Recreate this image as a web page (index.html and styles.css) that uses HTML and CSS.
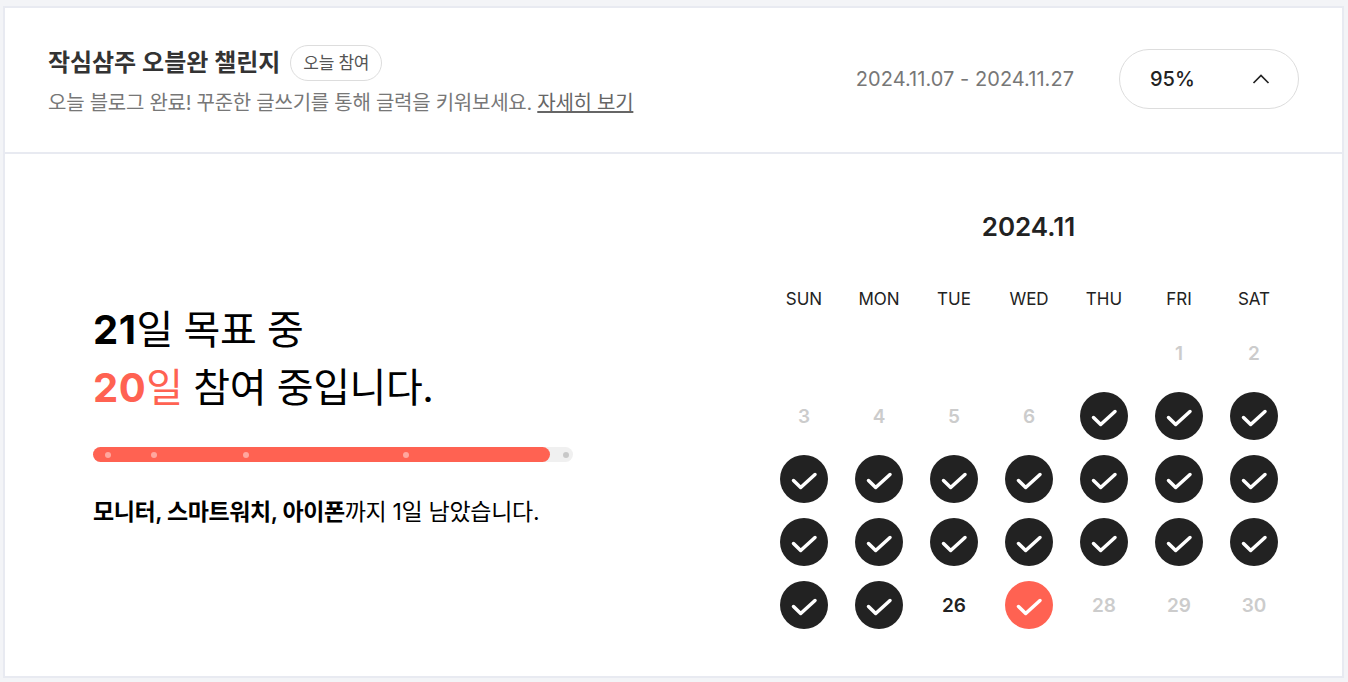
FILE: index.html
```html
<!DOCTYPE html>
<html lang="ko">
<head>
    <meta charset="UTF-8">
    <meta name="viewport" content="width=device-width, initial-scale=1.0">
    <title>작심삼주 오블완 챌린지</title>
    <link rel="stylesheet" href="styles.css">
</head>
<body>
    <section class="card">
        <header class="card-head">
            <div class="head-info">
                <div class="title-row">
                    <h2 class="title">작심삼주 오블완 챌린지</h2>
                    <span class="badge">오늘 참여</span>
                </div>
                <p class="desc">오늘 블로그 완료! 꾸준한 글쓰기를 통해 글력을 키워보세요. <a href="#" class="more">자세히 보기</a></p>
            </div>
            <span class="period">2024.11.07 - 2024.11.27</span>
            <button class="rate-btn" type="button">
                <span>95%</span>
                <svg class="chevron" width="20" height="20" viewBox="0 0 20 20" fill="none"><path d="M2.5 14 10 6.5 17.5 14" stroke="#222" stroke-width="1.7"/></svg>
            </button>
        </header>
        <div class="card-body">
            <div class="summary">
                <p class="goal"><b>21</b>일 목표 중<br><span class="accent"><b>20</b>일</span> 참여 중입니다.</p>
                <div class="progress">
                    <div class="progress-fill"></div>
                    <i class="dot dot-done dot-1"></i>
                    <i class="dot dot-done dot-2"></i>
                    <i class="dot dot-done dot-3"></i>
                    <i class="dot dot-done dot-4"></i>
                    <i class="dot dot-5"></i>
                </div>
                <p class="reward"><b>모니터, 스마트워치, 아이폰</b>까지 1일 남았습니다.</p>
            </div>
            <div class="calendar">
                <h3 class="month">2024.11</h3>
                <div class="week">
                    <span>SUN</span><span>MON</span><span>TUE</span><span>WED</span><span>THU</span><span>FRI</span><span>SAT</span>
                </div>
                <div class="days" id="days"></div>
            </div>
        </div>
    </section>
    <script>
        const days = document.getElementById('days');
        const check = '<svg width="48" height="48" viewBox="0 0 48 48" fill="none"><path d="M13.5 25.5 20.7 32.5 35 19.5" stroke="#fff" stroke-width="3.5" stroke-linecap="round" stroke-linejoin="round"/></svg>';

        // five leading blanks, the month starts on friday
        for (let i = 0; i < 5; i++) {
            days.appendChild(document.createElement('div'));
        }
        for (let d = 1; d <= 30; d++) {
            const cell = document.createElement('div');
            cell.className = 'day';
            if (d < 7 || d > 27) {
                cell.textContent = d;
                cell.classList.add('num', 'off');
            } else if (d === 26) {
                cell.textContent = d;
                cell.classList.add('num');
            } else {
                cell.classList.add(d === 27 ? 'today' : 'done');
                cell.innerHTML = check;
            }
            days.appendChild(cell);
        }
    </script>
</body>
</html>
```

FILE: styles.css
```css
* {
    box-sizing: border-box;
}
body {
    margin: 0;
    padding: 6px 4px 4px 3px;
    height: 682px;
    overflow: hidden;
    background-color: #f3f4f7;
    font-family: Inter, "Noto Sans CJK KR", sans-serif;
    color: #222;
}
p, h2, h3 {
    margin: 0;
}
.card {
    height: 672px;
    background: #fff;
    border: 2px solid #e8eaf1;
    display: flex;
    flex-direction: column;
}
.card-head {
    height: 146px;
    flex: none;
    display: flex;
    align-items: center;
    padding: 0 43px 2px 43px;
    border-bottom: 2px solid #e8eaf1;
}
.head-info {
    flex: 1;
    margin-top: 5px;
}
.title-row {
    display: flex;
    align-items: center;
    gap: 10px;
    margin-bottom: 7px;
}
.title {
    font-size: 24px;
    font-weight: 600;
    line-height: 36px;
    letter-spacing: -0.05px;
    color: #333;
}
.badge {
    display: inline-block;
    height: 36px;
    line-height: 34px;
    padding: 0 12px;
    border: 1px solid #ddd;
    border-radius: 18px;
    font-size: 17px;
    letter-spacing: -0.3px;
    color: #555;
}
.desc {
    font-size: 20px;
    line-height: 30px;
    color: #777;
    letter-spacing: -0.26px;
}
.more {
    color: #666;
    text-decoration: underline;
}
.period {
    font-size: 20px;
    letter-spacing: 0.05px;
    color: #777;
    margin-right: 45px;
}
.rate-btn {
    width: 180px;
    height: 60px;
    display: flex;
    align-items: center;
    justify-content: space-between;
    padding: 0 27px 0 30px;
    background: #fff;
    border: 1px solid #ddd;
    border-radius: 30px;
    font-family: inherit;
    font-size: 20px;
    font-weight: 500;
    color: #222;
}
.card-body {
    flex: 1;
    display: flex;
    justify-content: space-between;
    align-items: stretch;
    padding: 0 51px 0 88px;
}
.summary {
    width: 480px;
    align-self: center;
}
.goal {
    font-size: 40px;
    line-height: 58px;
    letter-spacing: -0.45px;
    color: #000;
}
.goal b {
    letter-spacing: 0.5px;
}
.accent {
    color: #ff6252;
}
.progress {
    position: relative;
    height: 15px;
    margin-top: 30px;
    background: #f0f0f0;
    border-radius: 8px;
}
.progress-fill {
    width: 95.2%;
    height: 100%;
    background: #ff6252;
    border-radius: 8px;
}
.dot {
    position: absolute;
    top: 5px;
    width: 6px;
    height: 6px;
    border-radius: 50%;
    background: #c8c8c8;
}
.dot-done {
    background: #ffa79e;
}
.dot-1 { left: 12px; }
.dot-2 { left: 58px; }
.dot-3 { left: 150px; }
.dot-4 { left: 310px; }
.dot-5 { left: 470px; }
.reward {
    margin-top: 33px;
    font-size: 23px;
    line-height: 35px;
    letter-spacing: -0.3px;
    color: #000;
}
.reward b {
    font-weight: 600;
    letter-spacing: -0.43px;
}
.calendar {
    width: 525px;
    padding-top: 55px;
}
.month {
    text-align: center;
    font-size: 26px;
    font-weight: 600;
    line-height: 36px;
    color: #222;
}
.week, .days {
    display: grid;
    grid-template-columns: repeat(7, 75px);
}
.week {
    margin-top: 40px;
    padding-left: 0.5px;
    font-size: 17px;
    line-height: 28px;
    text-align: center;
    color: #222;
}
.days {
    margin-top: 16px;
    grid-auto-rows: 48px;
    row-gap: 15px;
}
.day {
    display: flex;
    align-items: center;
    justify-content: center;
    width: 48px;
    height: 48px;
    margin: 0 auto;
    border-radius: 50%;
    font-size: 19px;
    font-weight: 600;
    color: #222;
}
.day.num {
    padding-left: 1px;
}
.day.off {
    color: #ccc;
}
.day.done {
    background: #222;
}
.day.today {
    background: #ff6252;
}
```
